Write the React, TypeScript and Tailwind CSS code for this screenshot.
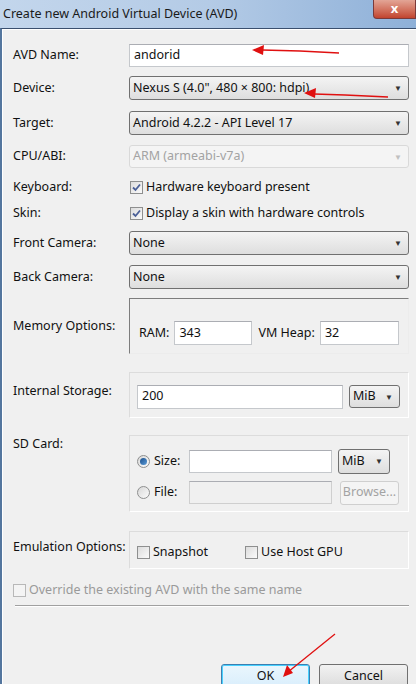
import React from "react";

const font = { fontFamily: '"Noto Sans", "Liberation Sans", sans-serif' };

function Select({ value, disabled = false, className = "" }: { value: string; disabled?: boolean; className?: string }) {
  return (
    <div
      className={`flex items-center justify-between rounded-[3px] border pl-[3px] pr-[6px] ${
        disabled
          ? "border-[#d9d9d9] bg-[#f4f4f4] text-[#a3a3a3]"
          : "border-[#707070] bg-gradient-to-b from-[#f4f4f4] to-[#dedede] text-[#111]"
      } ${className}`}
    >
      <span className="whitespace-nowrap">{value}</span>
      <span className={`text-[8px] ${disabled ? "text-[#c0c0c0]" : "text-[#333]"}`}>▼</span>
    </div>
  );
}

function Input({ value = "", disabled = false, className = "" }: { value?: string; disabled?: boolean; className?: string }) {
  return (
    <div
      className={`flex items-center border border-[#c5c8cc] border-t-[#abadb3] pl-[4px] ${
        disabled ? "bg-[#f0f0f0]" : "bg-white"
      } ${className}`}
    >
      {value}
    </div>
  );
}

function Check({ checked = false, disabled = false }: { checked?: boolean; disabled?: boolean }) {
  return (
    <span
      className={`flex h-[13px] w-[13px] shrink-0 items-center justify-center border ${
        disabled ? "border-[#b8b8b8] bg-[#f4f4f4]" : "border-[#8e8f8f] bg-gradient-to-br from-[#dcdcdc] to-[#fafafa]"
      }`}
    >
      {checked && (
        <svg width="9" height="9" viewBox="0 0 9 9">
          <path d="M1 4.5 L3.5 7 L8 1.5" stroke="#4a5f97" strokeWidth="1.8" fill="none" />
        </svg>
      )}
    </span>
  );
}

function Radio({ checked = false }: { checked?: boolean }) {
  return (
    <span className="flex h-[13px] w-[13px] shrink-0 items-center justify-center rounded-full border border-[#8e8f8f] bg-gradient-to-br from-[#d8d8d8] to-[#fbfbfb]">
      {checked && <span className="h-[7px] w-[7px] rounded-full bg-gradient-to-br from-[#1b4f8c] to-[#5a9bd8]" />}
    </span>
  );
}

function Row({ label, children, className = "" }: { label: string; children: React.ReactNode; className?: string }) {
  return (
    <div className={`flex items-center ${className}`}>
      <div className="w-[116px] shrink-0">{label}</div>
      <div className="flex-1">{children}</div>
    </div>
  );
}

export default function App() {
  return (
    <div className="relative h-[684px] w-[416px] overflow-hidden bg-[#f0f0f0] text-[12.5px] text-[#111]" style={font}>
      {/* title bar */}
      <div className="relative flex h-[28px] items-center bg-gradient-to-r from-[#c3d6ec] via-[#b4cbe6] to-[#8eb0d8] pl-[3px] text-[12.5px] text-[#1a1a1a]">
        Create new Android Virtual Device (AVD)
        <div className="absolute right-0 top-0 flex h-[19px] w-[43px] items-center justify-center rounded-bl-[4px] border border-t-0 border-[#7a3a3a] bg-gradient-to-b from-[#e2a596] to-[#c1432e] text-[13px] font-bold text-white">
          x
        </div>
      </div>

      <div className="border-l-[2px] border-t border-l-[#54769e] border-t-[#3a4f6e] h-full">
        <div className="border-l border-t border-white pl-[10px] pr-[7px] pt-[14px]">
          <Row label="AVD Name:">
            <Input value="andorid" className="h-[23px]" />
          </Row>
          <Row label="Device:" className="mt-[9px]">
            <Select value={'Nexus S (4.0", 480 × 800: hdpi)'} className="h-[24px]" />
          </Row>
          <Row label="Target:" className="mt-[11px]">
            <Select value="Android 4.2.2 - API Level 17" className="h-[24px]" />
          </Row>
          <Row label="CPU/ABI:" className="mt-[10px]">
            <Select value="ARM (armeabi-v7a)" disabled className="h-[23px]" />
          </Row>
          <Row label="Keyboard:" className="mt-[9px] h-[20px]">
            <div className="flex items-center gap-[3px] pl-[1px]">
              <Check checked />
              Hardware keyboard present
            </div>
          </Row>
          <Row label="Skin:" className="mt-[6px] h-[20px]">
            <div className="flex items-center gap-[3px] pl-[1px]">
              <Check checked />
              Display a skin with hardware controls
            </div>
          </Row>
          <Row label="Front Camera:" className="mt-[8px]">
            <Select value="None" className="h-[24px]" />
          </Row>
          <Row label="Back Camera:" className="mt-[10px]">
            <Select value="None" className="h-[24px]" />
          </Row>
          <Row label="Memory Options:" className="mt-[9px]">
            <div className="flex h-[56px] items-end border border-[#ececec] border-l-[#7d7d7d] border-t-[#7d7d7d] pb-[8px] pl-[9px] pr-[9px]">
              <div className="flex w-full items-center">
                <span>RAM:</span>
                <Input value="343" className="ml-[5px] h-[24px] w-[78px]" />
                <span className="ml-[6px]">VM Heap:</span>
                <Input value="32" className="ml-[5px] h-[24px] flex-1" />
              </div>
            </div>
          </Row>

          <div className="mt-[18px] flex items-start">
            <div className="w-[116px] shrink-0 pt-[10px]">Internal Storage:</div>
            <div className="flex h-[46px] flex-1 items-center border border-[#dcdcdc] border-b-white border-r-white pl-[7px] pr-[8px]">
              <Input value="200" className="mt-[3px] h-[24px] flex-1" />
              <Select value="MiB" className="ml-[6px] mt-[3px] h-[23px] w-[51px]" />
            </div>
          </div>

          <div className="mt-[17px] flex items-start">
            <div className="w-[116px] shrink-0 pt-[0px]">SD Card:</div>
            <div className="flex h-[77px] flex-1 flex-col justify-center gap-[7px] border border-[#dcdcdc] border-b-white border-r-white pl-[7px] pr-[9px] pt-[6px]">
              <div className="flex items-center">
                <div className="flex w-[52px] items-center gap-[4px]">
                  <Radio checked />
                  Size:
                </div>
                <Input className="h-[23px] w-[143px]" />
                <Select value="MiB" className="ml-[6px] h-[25px] w-[52px]" />
              </div>
              <div className="flex items-center">
                <div className="flex w-[52px] items-center gap-[4px]">
                  <Radio />
                  File:
                </div>
                <Input disabled className="h-[23px] w-[143px] border-[#cfcfcf]" />
                <div className="ml-[8px] flex h-[24px] flex-1 items-center justify-center rounded-[3px] border border-[#cfcfcf] bg-[#f4f4f4] text-[#a3a3a3]">
                  Browse...
                </div>
              </div>
            </div>
          </div>

          <div className="mt-[19px] flex items-start">
            <div className="w-[116px] shrink-0 pt-[7px]">Emulation Options:</div>
            <div className="flex h-[38px] flex-1 items-center border border-[#dcdcdc] border-b-white border-r-white pl-[7px] pt-[5px]">
              <div className="flex w-[108px] items-center gap-[3px]">
                <Check />
                Snapshot
              </div>
              <div className="flex items-center gap-[3px]">
                <Check />
                Use Host GPU
              </div>
            </div>
          </div>

          <div className="mt-[12px] flex h-[19px] items-center gap-[3px] text-[#9a9a9a]">
            <Check disabled />
            Override the existing AVD with the same name
          </div>
          <div className="mt-[5px] ml-[2px] border-t border-b border-t-[#a0a0a0] border-b-white" />

          <div className="mt-[57px] flex justify-end gap-[9px] pr-[1px]">
            <div className="flex h-[24px] w-[89px] items-center justify-center rounded-[3px] border border-[#3c7fb1] bg-gradient-to-b from-[#eaf6fd] to-[#d9eefc] shadow-[inset_0_0_0_1px_#48d1ff]">
              OK
            </div>
            <div className="flex h-[24px] w-[89px] items-center justify-center rounded-[3px] border border-[#707070] bg-gradient-to-b from-[#f2f2f2] to-[#dcdcdc]">
              Cancel
            </div>
          </div>
        </div>
      </div>

      {/* red annotation arrows */}
      <svg className="pointer-events-none absolute left-0 top-0" width="416" height="684">
        <g stroke="#e01010" strokeWidth="1.3" fill="none">
          <path d="M339 53 L300 51 L262 50" />
          <path d="M388 97 L345 95 L314 94" />
          <path d="M335 634 L288 672" />
        </g>
        <g fill="#e01010">
          <path d="M252 50 L264 45 L263 55 Z" />
          <path d="M304 93 L316 88 L315 98 Z" />
          <path d="M283 677 L287 665 L293 673 Z" />
        </g>
      </svg>
    </div>
  );
}
